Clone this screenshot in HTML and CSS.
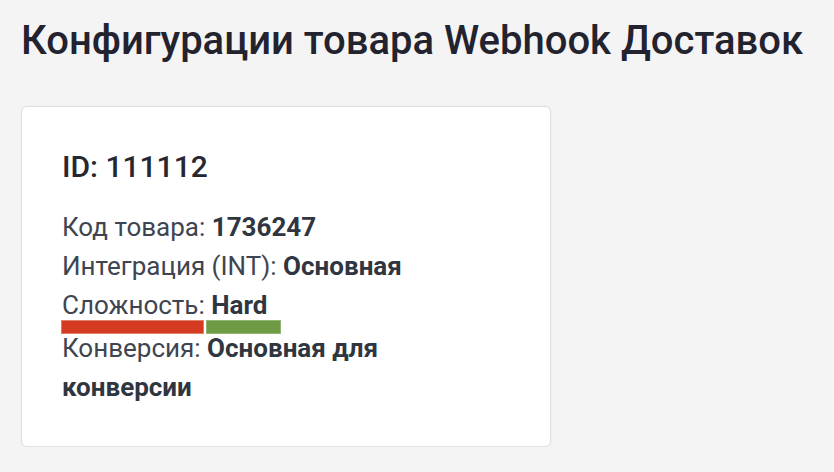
FILE: index.html
```html
<!DOCTYPE html>
<html lang="ru">
<head>
<meta charset="utf-8">
<title>Конфигурации товара Webhook Доставок</title>
<link rel="stylesheet" href="styles.css">
</head>
<body>
<main class="page">
  <h1 class="title">Конфигурации товара Webhook Доставок</h1>
  <section class="card">
    <h2 class="card-id">ID: 111112</h2>
    <div class="props">
      <p class="prop">Код товара: <b>1736247</b></p>
      <p class="prop">Интеграция (INT): <b>Основная</b></p>
      <p class="prop prop-tight">Сложность: <b>Hard</b></p>
      <div class="bars">
        <span class="bar bar-red"></span>
        <span class="bar bar-green"></span>
      </div>
      <p class="prop prop-after">Конверсия: <b>Основная для конверсии</b></p>
    </div>
  </section>
</main>
</body>
</html>
```

FILE: styles.css
```css
html, body {
  margin: 0;
  padding: 0;
  background: #f4f4f4;
}

body {
  font-family: Roboto, "Noto Sans", "Liberation Sans", sans-serif;
}

.page {
  padding: 17px 20px 0 21px;
}

.title {
  margin: 0;
  font-size: 40px;
  font-weight: 500;
  line-height: 47px;
  color: #23232f;
  letter-spacing: 0;
}

.card {
  margin-top: 42px;
  width: 448px;
  padding: 42px 40px 39px 40px;
  background: #ffffff;
  border: 1px solid #e1e1e1;
  border-radius: 6px;
  box-shadow: 0 0 0 1px #efefef;
}

.card-id {
  margin: 0 0 24px 0;
  font-size: 30px;
  font-weight: 500;
  line-height: 35px;
  color: #262731;
}

.props {
  display: flex;
  flex-direction: column;
}

.prop {
  margin: 0;
  font-size: 26px;
  line-height: 39px;
  color: #3e4550;
}

.prop-tight {
  line-height: 30px;
  padding-top: 4px;
}

.prop-after {
  margin-top: -5px;
}

.prop b {
  font-weight: 700;
  color: #2f3640;
}

.bars {
  display: flex;
  gap: 2px;
  margin: 0 0 0 -1px;
  height: 14px;
}

.bar {
  display: block;
  height: 14px;
  box-sizing: border-box;
}

.bar-red {
  width: 143px;
  background: #d43b21;
  border: 1px solid #e0806b;
}

.bar-green {
  width: 75px;
  background: #6f9b44;
  border: 1px solid #92b571;
}
```
